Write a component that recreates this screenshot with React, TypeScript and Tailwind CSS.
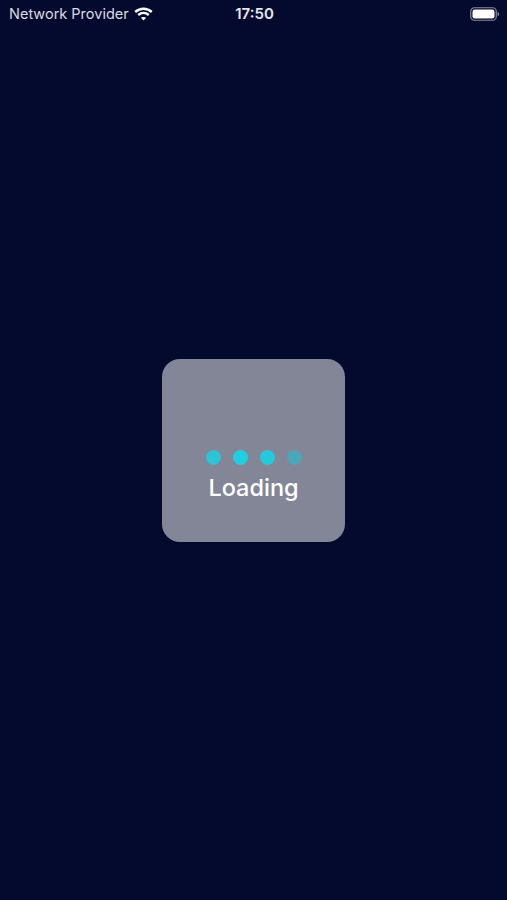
import React from 'react';

const dots = ['bg-[#2ac4d6]', 'bg-[#20d0e2]', 'bg-[#24cadc]', 'bg-[#4ba6b8]'];

const WifiIcon = () => (
  <svg width="19" height="14" viewBox="0 0 19 14" fill="none" stroke="#fff" strokeWidth="2.4">
    <path d="M1.2 5 C6 0.6 13 0.6 17.8 5" />
    <path d="M4.2 8 C7.4 5.2 11.6 5.2 14.8 8" />
    <path d="M9.5 13.4 L6.9 10.8 C8.4 9.6 10.6 9.6 12.1 10.8 Z" fill="#fff" stroke="none" />
  </svg>
);

const BatteryIcon = () => (
  <svg width="30" height="14" viewBox="0 0 30 14" fill="none">
    <rect x="0.75" y="0.75" width="25.5" height="12.5" rx="3.6" stroke="#8a8b9c" strokeWidth="1.2" />
    <rect x="2.5" y="2.5" width="22" height="9" rx="2.2" fill="#fff" />
    <path d="M27.6 5 C28.6 5.3 29.2 6 29.2 7 C29.2 8 28.6 8.7 27.6 9 Z" fill="#8a8b9c" />
  </svg>
);

const App: React.FC = () => {
  return (
    <div className="w-[507px] h-[900px] bg-[#040a2e] flex flex-col overflow-hidden font-['Inter','Liberation_Sans',sans-serif]">
      <div className="h-[27px] shrink-0 grid grid-cols-[1fr_auto_1fr] items-center pl-[9px] pr-[7px] text-white">
        <div className="flex items-center gap-[5px]">
          <span className="text-[14.5px] leading-[27px] text-[#d9dae2]">Network Provider</span>
          <WifiIcon />
        </div>
        <span className="text-[15px] leading-[27px] font-semibold text-[#e6e7ed]">17:50</span>
        <div className="flex justify-end">
          <BatteryIcon />
        </div>
      </div>
      <div className="flex-1 flex items-start justify-center pt-[332px]">
        <div className="w-[183px] h-[183px] rounded-[18px] bg-[#838697] flex flex-col items-center pt-[91px]">
          <div className="flex gap-[12px]">
            {dots.map(color => (
              <span key={color} className={`w-[15px] h-[15px] rounded-full ${color}`} />
            ))}
          </div>
          <span className="mt-[8px] text-[23.5px] leading-[30px] font-medium text-white">Loading</span>
        </div>
      </div>
    </div>
  );
};

export default App;
